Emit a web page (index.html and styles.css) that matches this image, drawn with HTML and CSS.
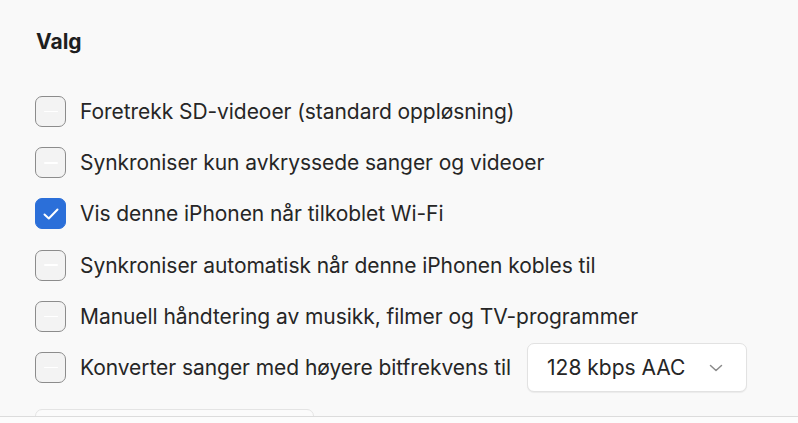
FILE: index.html
```html
<!DOCTYPE html>
<html lang="no">
<head>
<meta charset="utf-8">
<link rel="stylesheet" href="styles.css">
</head>
<body>
<div class="pane">
  <h2 class="title">Valg</h2>
  <div class="options">
    <div class="row"><span class="box"><span class="dash"></span></span><span class="label">Foretrekk SD-videoer (standard oppløsning)</span></div>
    <div class="row"><span class="box"><span class="dash"></span></span><span class="label">Synkroniser kun avkryssede sanger og videoer</span></div>
    <div class="row"><span class="box checked"><svg width="18" height="14" viewBox="0 0 18 14"><path d="M2.5 7.5 L6.8 11.5 L15.5 2.5" fill="none" stroke="#fff" stroke-width="2" stroke-linecap="round" stroke-linejoin="round"/></svg></span><span class="label">Vis denne iPhonen når tilkoblet Wi-Fi</span></div>
    <div class="row"><span class="box"><span class="dash"></span></span><span class="label">Synkroniser automatisk når denne iPhonen kobles til</span></div>
    <div class="row"><span class="box"><span class="dash"></span></span><span class="label">Manuell håndtering av musikk, filmer og TV-programmer</span></div>
    <div class="row"><span class="box"><span class="dash"></span></span><span class="label">Konverter sanger med høyere bitfrekvens til</span>
      <span class="select"><span class="select-text">128 kbps AAC</span><svg width="14" height="8" viewBox="0 0 14 8"><path d="M1.5 1.5 L7 6.5 L12.5 1.5" fill="none" stroke="#8a8a8a" stroke-width="1.5" stroke-linecap="round" stroke-linejoin="round"/></svg></span>
    </div>
  </div>
  <div class="button"></div>
</div>
<div class="footer"></div>
</body>
</html>
```
FILE: styles.css
```css
html, body {
  margin: 0;
  padding: 0;
}
body {
  width: 798px;
  height: 423px;
  overflow: hidden;
  background: #f9f9f9;
  font-family: Inter, "Liberation Sans", sans-serif;
  color: #262626;
}
.pane {
  height: 417px;
  box-sizing: border-box;
  border-bottom: 1px solid #dcdcdc;
  overflow: hidden;
  padding: 30px 0 0 35px;
}
.title {
  margin: 0;
  font-size: 21px;
  line-height: 24px;
  font-weight: 700;
  color: #1e1e1e;
  padding-left: 1px;
}
.options {
  margin-top: 32px;
  display: flex;
  flex-direction: column;
}
.row {
  height: 51.2px;
  display: flex;
  align-items: center;
}
.box {
  width: 31px;
  height: 31px;
  box-sizing: border-box;
  border: 1.5px solid #8c8c8c;
  border-radius: 7px;
  background: #f3f3f3;
  display: flex;
  align-items: center;
  justify-content: center;
  flex: none;
}
.dash {
  width: 14px;
  height: 1.5px;
  background: #ffffff;
  border-radius: 1px;
}
.box.checked {
  background: #2b6fd9;
  border-color: #2b6fd9;
}
.label {
  margin-left: 14px;
  font-size: 21px;
  letter-spacing: -0.06px;
  white-space: nowrap;
}
.select {
  margin-left: 16px;
  width: 220px;
  height: 49px;
  box-sizing: border-box;
  background: #ffffff;
  border: 1px solid #e2e2e2;
  border-radius: 7px;
  box-shadow: 0 1px 1px rgba(0,0,0,0.06);
  display: flex;
  align-items: center;
  padding: 0 23px 0 19px;
}
.select-text {
  font-size: 21px;
  flex: 1;
}
.button {
  margin-top: 16px;
  width: 279px;
  height: 40px;
  box-sizing: border-box;
  background: #fbfbfb;
  border: 1px solid #e4e4e4;
  border-radius: 7px;
}
.footer {
  height: 6px;
  background: #fcfcfc;
}
```
